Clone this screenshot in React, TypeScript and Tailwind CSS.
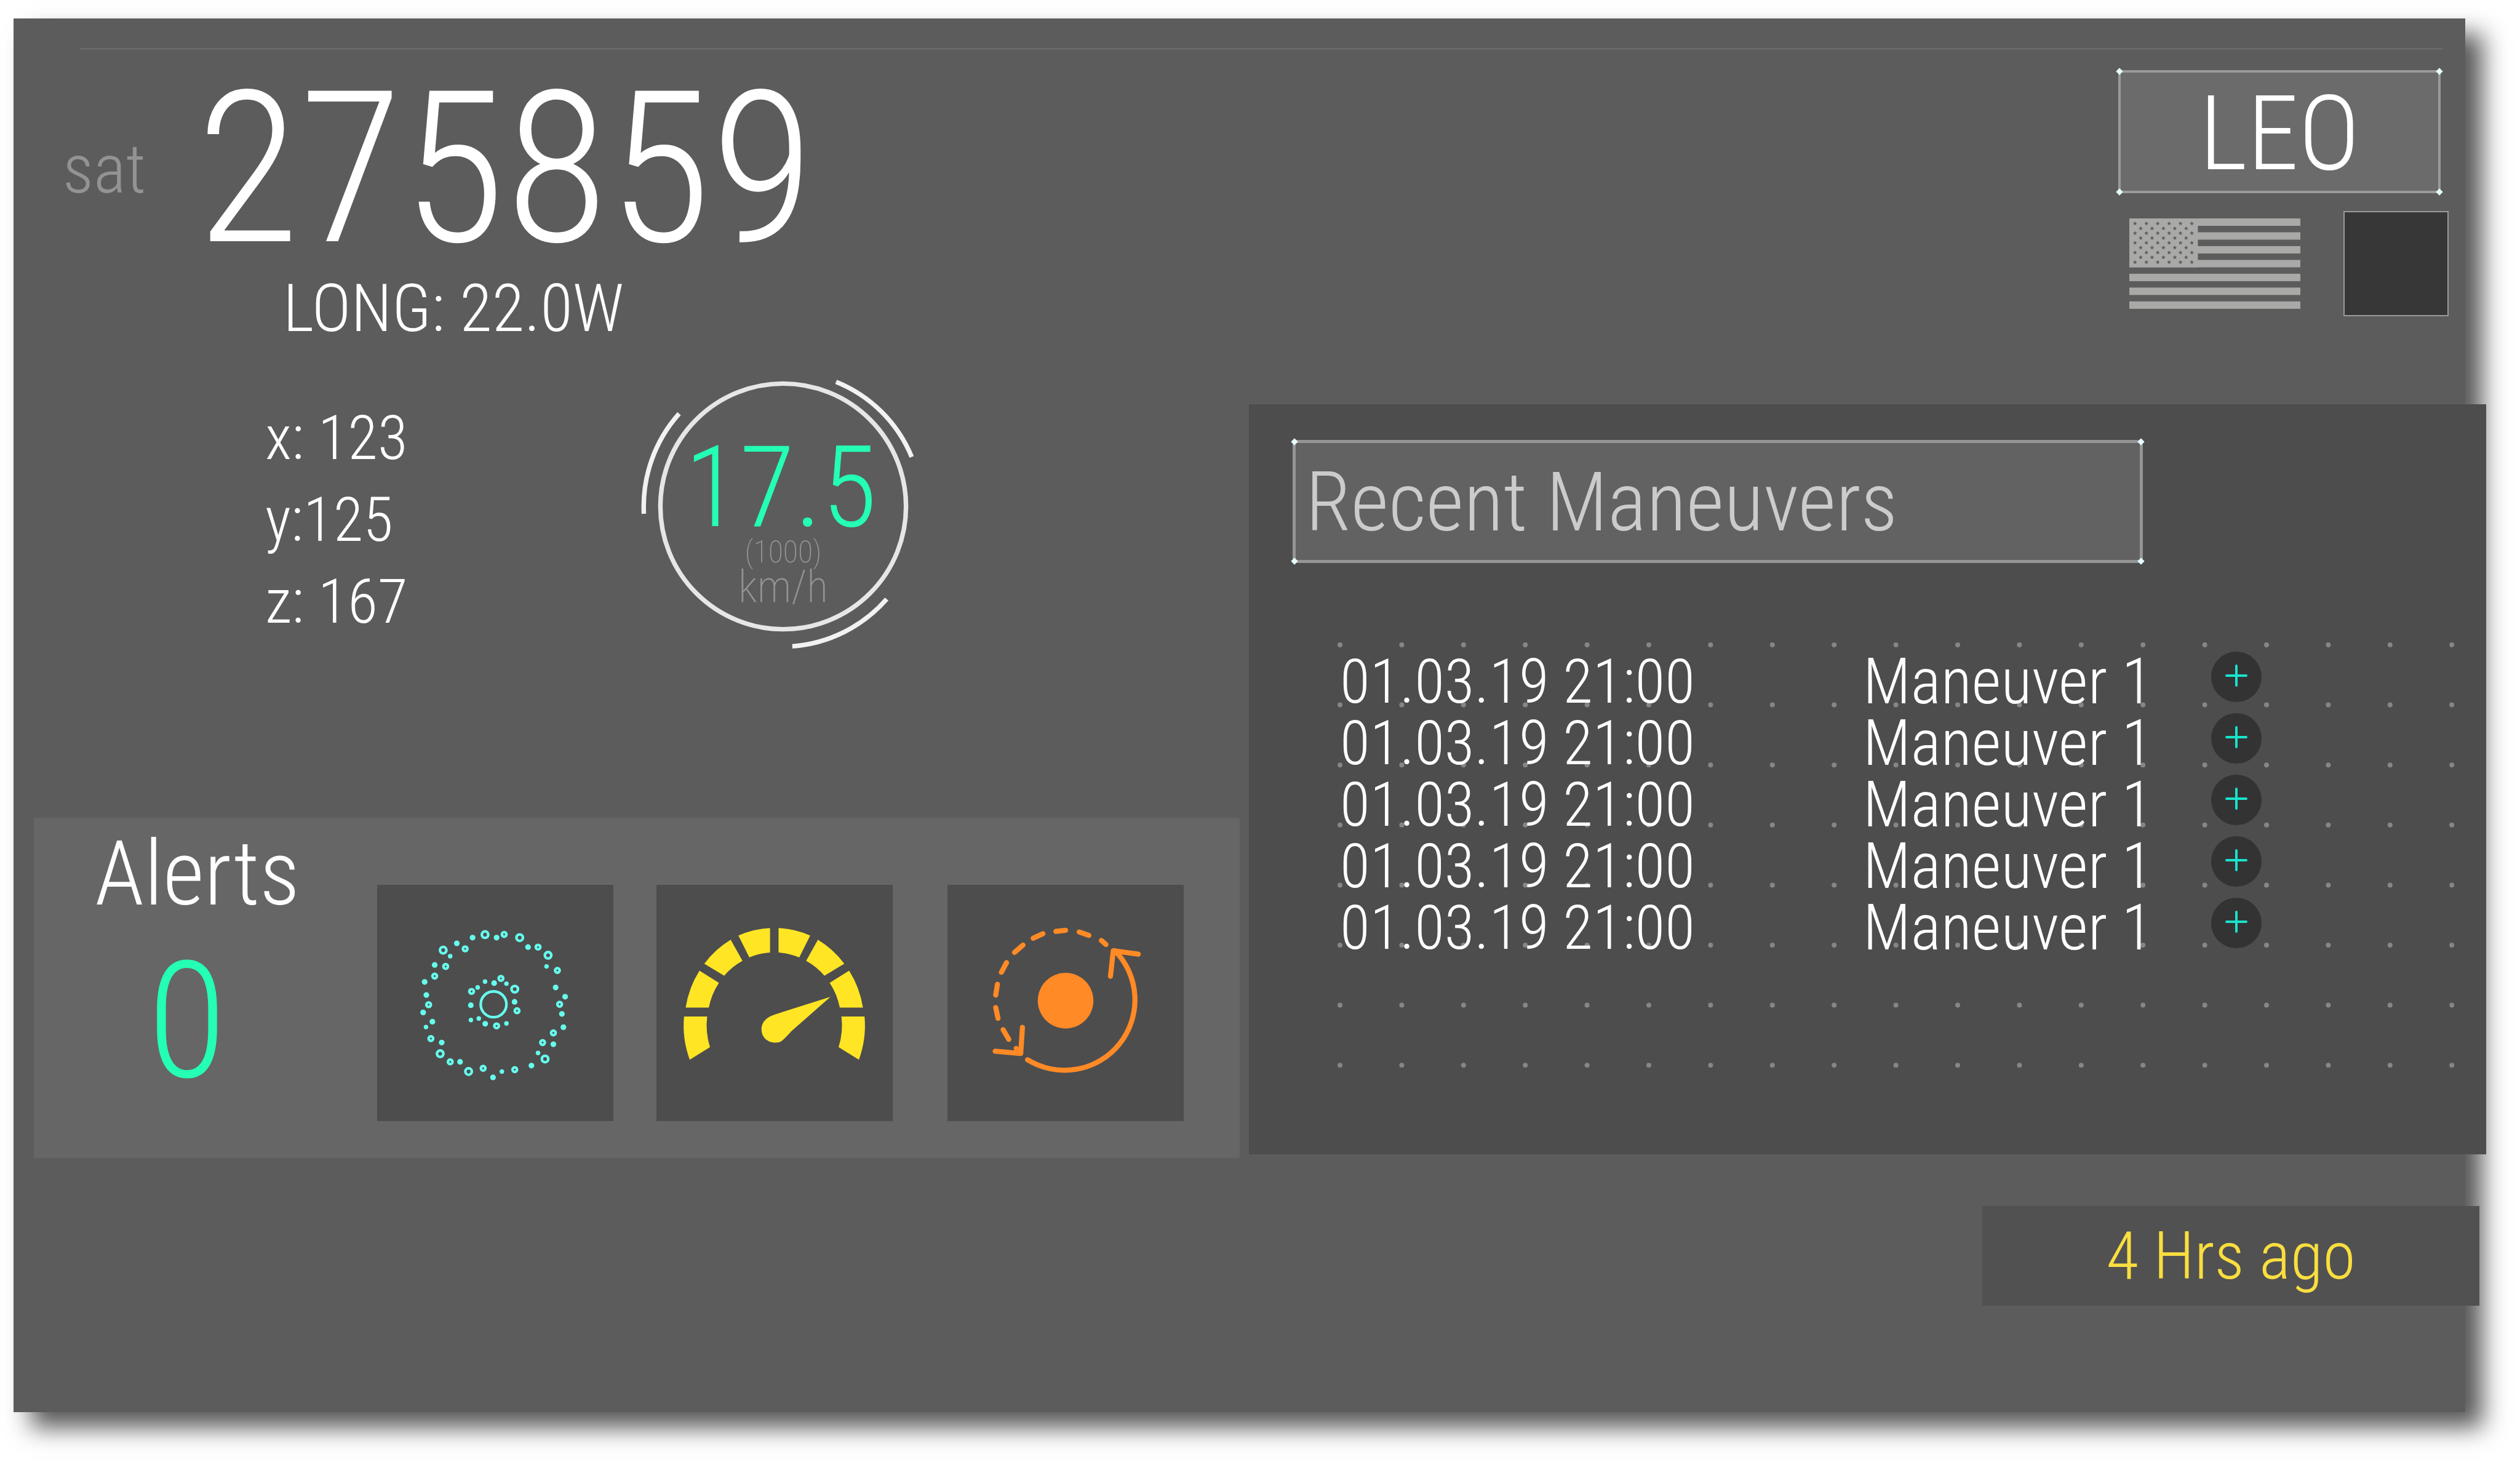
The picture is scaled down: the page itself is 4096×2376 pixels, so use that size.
import type { ReactNode } from "react";

const maneuvers = [1, 2, 3, 4, 5].map((id) => ({
  id,
  time: "01.03.19 21:00",
  name: "Maneuver 1",
}));

const coordinates = ["x: 123", "y:125", "z: 167"];

function FramedBox({ className, children }: { className: string; children: ReactNode }) {
  return (
    <div className={`relative flex items-center ${className}`}>
      <span className="absolute -left-1.5 -top-1.5 size-2 rotate-45 bg-[#e6ffff]" />
      <span className="absolute -right-1.5 -top-1.5 size-2 rotate-45 bg-[#e6ffff]" />
      <span className="absolute -left-1.5 -bottom-1.5 size-2 rotate-45 bg-[#e6ffff]" />
      <span className="absolute -right-1.5 -bottom-1.5 size-2 rotate-45 bg-[#e6ffff]" />
      {children}
    </div>
  );
}

function starPoints(cx: number, cy: number, r: number) {
  const points: string[] = [];
  for (let i = 0; i < 10; i++) {
    const radius = i % 2 === 0 ? r : r * 0.42;
    const angle = -Math.PI / 2 + (i * Math.PI) / 5;
    points.push(`${(cx + radius * Math.cos(angle)).toFixed(1)},${(cy + radius * Math.sin(angle)).toFixed(1)}`);
  }
  return points.join(" ");
}

function Flag() {
  const stars: string[] = [];
  for (let row = 0; row < 9; row++) {
    const offset = row % 2 === 0 ? 30 : 60;
    const count = row % 2 === 0 ? 6 : 5;
    for (let i = 0; i < count; i++) stars.push(starPoints(offset + i * 60, 27 + row * 25.5, 12));
  }
  return (
    <svg viewBox="0 0 903 477" className="w-[278px]" role="img" aria-label="United States flag">
      {[0, 1, 2, 3, 4, 5, 6].map((i) => (
        <rect key={i} x="0" y={i * 73} width="903" height="39" fill="#a9a9a7" />
      ))}
      <rect x="0" y="0" width="362" height="258" fill="#a9a9a7" />
      {stars.map((points) => (
        <polygon key={points} points={points} fill="#5c5c5c" />
      ))}
    </svg>
  );
}

function SpeedGauge() {
  return (
    <div className="relative flex size-[464px] flex-col items-center pt-[121px]">
      <svg viewBox="-251 -251 502 502" className="absolute inset-0 size-full" fill="none" aria-hidden="true">
        <circle r="216" stroke="#e6e6e6" strokeWidth="8" />
        <g stroke="#f2f2f2" strokeWidth="8">
          <path d="M93 -219 A241 241 0 0 1 226 -87" />
          <path d="M16 246 A245 245 0 0 0 182 163" />
          <path d="M-183 -163 A245 245 0 0 0 -245 13" />
        </g>
      </svg>
      <span className="relative pr-2 text-[184px] leading-[160px] text-[#24ffb4]">17.5</span>
      <span className="relative text-[50px] font-extralight leading-[50px] text-[#939393]">(1000)</span>
      <span className="relative text-[72px] font-extralight leading-[64px] text-[#939393]">km/h</span>
    </div>
  );
}

const rings: [number, number, number][] = [
  [402, 101, 3], [585, 117, 3], [735, 210, 3], [181, 183, 3], [559, 389, 3], [165, 730, 3], [315, 824, 3], [719, 758, 3],
  [503, 100, 2], [297, 176, 2], [682, 167, 2], [784, 290, 2], [194, 269, 2], [136, 320, 2], [486, 332, 2], [331, 401, 2],
  [104, 471, 2], [571, 503, 2], [796, 469, 2], [463, 583, 2], [763, 620, 2], [706, 671, 2], [116, 650, 2], [218, 773, 2],
  [392, 807, 2], [559, 814, 2],
  [336, 117, 1], [463, 117, 1], [253, 147, 1], [629, 167, 1], [136, 261, 1], [83, 351, 1], [92, 420, 1], [75, 512, 1],
  [124, 561, 1], [173, 671, 1], [270, 773, 1], [444, 855, 1], [647, 793, 1], [763, 680, 1], [816, 590, 1], [808, 520, 1],
  [825, 429, 1], [775, 380, 1], [450, 357, 1], [558, 456, 1], [327, 474, 1], [403, 572, 1],
  [218, 215, 0], [727, 269, 0], [402, 349, 0], [363, 380, 0], [515, 360, 0], [327, 552, 0], [369, 544, 0], [515, 570, 0],
  [90, 589, 0], [491, 824, 0], [682, 726, 0],
];

function DebrisIcon() {
  return (
    <svg viewBox="-168 -162 1248 1248" className="size-full" aria-hidden="true">
      <circle cx="447" cy="469" r="68" fill="none" stroke="#66ffee" strokeWidth="14" />
      {rings.map(([x, y, kind]) => {
        if (kind === 3) return <circle key={`${x}-${y}`} cx={x} cy={y} r="17" fill="none" stroke="#66ffee" strokeWidth="14" />;
        if (kind === 2) return <circle key={`${x}-${y}`} cx={x} cy={y} r="12" fill="none" stroke="#66ffee" strokeWidth="14" />;
        return <circle key={`${x}-${y}`} cx={x} cy={y} r={kind === 1 ? 15 : 12} fill="#66ffee" />;
      })}
    </svg>
  );
}

function SpeedometerIcon() {
  const segments = (
    <>
      <path d="M358 370 A223 468 0 0 0 280 407 L307 515 A166 345 0 0 1 358 491 Z" />
      <path d="M261 428 A223 468 0 0 0 196 546 L245 605 A166 345 0 0 1 290 532 Z" />
      <path d="M184 580 A223 468 0 0 0 150 762 L207 762 A166 345 0 0 1 232 640 Z" />
      <path d="M146 806 A223 468 0 0 0 160 1019 L210 957 A166 345 0 0 1 203 806 Z" />
    </>
  );
  return (
    <svg viewBox="0 0 416 416" className="size-full" aria-hidden="true">
      <g transform="scale(0.7143 0.3571) translate(-78 -157)" fill="#ffe524">
        {segments}
        <g transform="translate(737 0) scale(-1 1)">{segments}</g>
        <path d="M507 709 L370 796 C345 812 337 840 337 870 C337 910 353 935 370 935 C380 935 386 930 392 918 C400 902 405 892 410 880 Z" />
      </g>
    </svg>
  );
}

function OrbitIcon() {
  return (
    <svg viewBox="0 0 416 416" className="size-full" aria-hidden="true">
      <circle cx="208" cy="204" r="49" fill="#ff8a26" />
      <g fill="none" stroke="#ff8a26" strokeWidth="9" strokeLinecap="round" strokeLinejoin="round">
        <path d="M295 116 A124 124 0 0 1 141 308" />
        <path d="M336 122 L292 116 L287 161" />
        <path d="M84 293 L129 297 L132 251" />
        <path d="M191 82 L208 80 M232 83 L249 89 M271 98 L279 105 M151 94 L168 86 M118 119 L133 106 M95 154 L104 137 M85 194 L88 175 M85 216 L89 235 M98 255 L108 272 M121 288 L127 294" />
      </g>
    </svg>
  );
}

function DotGrid() {
  const dots: ReactNode[] = [];
  for (let row = 0; row < 8; row++) {
    for (let col = 0; col < 19; col++) {
      dots.push(<circle key={`${row}-${col}`} cx={4 + col * 100.4} cy={4 + row * 97.6} r="4" />);
    }
  }
  return (
    <svg viewBox="0 0 1815 691" className="absolute inset-x-0 top-0 w-full" fill="#868686" aria-hidden="true">
      {dots}
    </svg>
  );
}

function AlertTile({ label, className = "", children }: { label: string; className?: string; children: ReactNode }) {
  return (
    <button type="button" aria-label={label} className={`size-[384px] shrink-0 bg-[#4d4d4d] ${className}`}>
      {children}
    </button>
  );
}

export default function App() {
  return (
    <div className="flex min-h-screen overflow-hidden bg-white pb-[81px] pl-[22px] pr-[89px] pt-[30px] font-['Roboto_Condensed',Roboto,sans-serif] font-light text-white">
      <main className="flex-1 bg-[#5c5c5c] pt-[49px] shadow-[28px_25px_37px_rgba(0,0,0,0.66)]">
        <hr className="ml-[107px] mr-9 border-t border-[#7c7c7c]" />
        <div className="grid grid-cols-[1993fr_1977fr] gap-x-[15px]">
          <section>
            <h1 className="mt-[23px] flex items-center gap-[82px] pl-[80px]">
              <span className="text-[112px] leading-none text-[#939393]">sat</span>
              <span className="text-[344px] leading-none">275859</span>
            </h1>
            <p className="pl-[438px] text-[108px] leading-[108px]">LONG: 22.0W</p>
            <div className="mt-9 flex items-start pl-[409px]">
              <ul className="mt-[54px] w-[610px] text-[100px] leading-[133px]">
                {coordinates.map((c) => (
                  <li key={c}>{c}</li>
                ))}
              </ul>
              <SpeedGauge />
            </div>

            <section className="ml-[33px] mt-[274px] flex bg-[#666666] pb-[60px] pl-[99px]">
              <div className="w-[300px] pt-[22px]">
                <h2 className="whitespace-nowrap text-[146px] leading-[140px]">Alerts</h2>
                <p className="mt-[37px] text-center text-[264px] leading-none text-[#24ffb4]">0</p>
              </div>
              <div className="ml-[159px] mt-[109px] flex">
                <AlertTile label="Debris alerts">
                  <DebrisIcon />
                </AlertTile>
                <AlertTile label="Speed alerts" className="ml-[70px]">
                  <SpeedometerIcon />
                </AlertTile>
                <AlertTile label="Orbit alerts" className="ml-[89px]">
                  <OrbitIcon />
                </AlertTile>
              </div>
            </section>
          </section>

          <section className="flex flex-col">
            <div className="mt-[34px] flex flex-col items-end">
              <FramedBox className="mr-10 h-[200px] w-[524px] justify-center border-4 border-[#9a9a9a] bg-[#6b6b6b] pt-2">
                <span className="text-[168px] leading-none">LEO</span>
              </FramedBox>
              <div className="mr-[27px] mt-[29px] flex items-center gap-[70px]">
                <Flag />
                <div className="size-[171px] border-2 border-[#9a9a9a] bg-[#373737]" />
              </div>
            </div>

            <section className="-mr-[34px] mt-[143px] bg-[#4d4d4d] pb-[141px] pl-[71px] pt-[58px]">
              <FramedBox className="h-[200px] w-[1382px] border-[5px] border-[#959595] bg-[#626262] pl-4 pt-1">
                <h2 className="text-[134px] leading-none text-[#cbcbcb]">Recent Maneuvers</h2>
              </FramedBox>
              <div className="relative ml-[73px] mr-[52px] mt-[129px] min-h-[691px] pl-1 pt-3.5">
                <DotGrid />
                <table className="relative table-fixed text-left text-[100px] leading-[100px]">
                  <colgroup>
                    <col className="w-[850px]" />
                    <col className="w-[566px]" />
                    <col className="w-[82px]" />
                  </colgroup>
                  <tbody>
                    {maneuvers.map((m) => (
                      <tr key={m.id} className="h-[100px]">
                        <td className="p-0">{m.time}</td>
                        <td className="p-0 text-[104px]">{m.name}</td>
                        <td className="p-0 pb-4 align-middle">
                          <button
                            type="button"
                            aria-label={`Expand ${m.name}`}
                            className="flex size-[82px] items-center justify-center rounded-full bg-[#333333]"
                          >
                            <svg viewBox="0 0 36 36" className="mb-1 size-9" stroke="#18e3cb" strokeWidth="4" strokeLinecap="round">
                              <path d="M18 2 V34 M2 18 H34" />
                            </svg>
                          </button>
                        </td>
                      </tr>
                    ))}
                  </tbody>
                </table>
              </div>
            </section>

            <div className="-mr-[23px] mt-[84px] flex h-[162px] w-[808px] items-center justify-center self-end bg-[#515151]">
              <p className="text-[108px] leading-none text-[#f9de3f]">4 Hrs ago</p>
            </div>
          </section>
        </div>
      </main>
    </div>
  );
}
